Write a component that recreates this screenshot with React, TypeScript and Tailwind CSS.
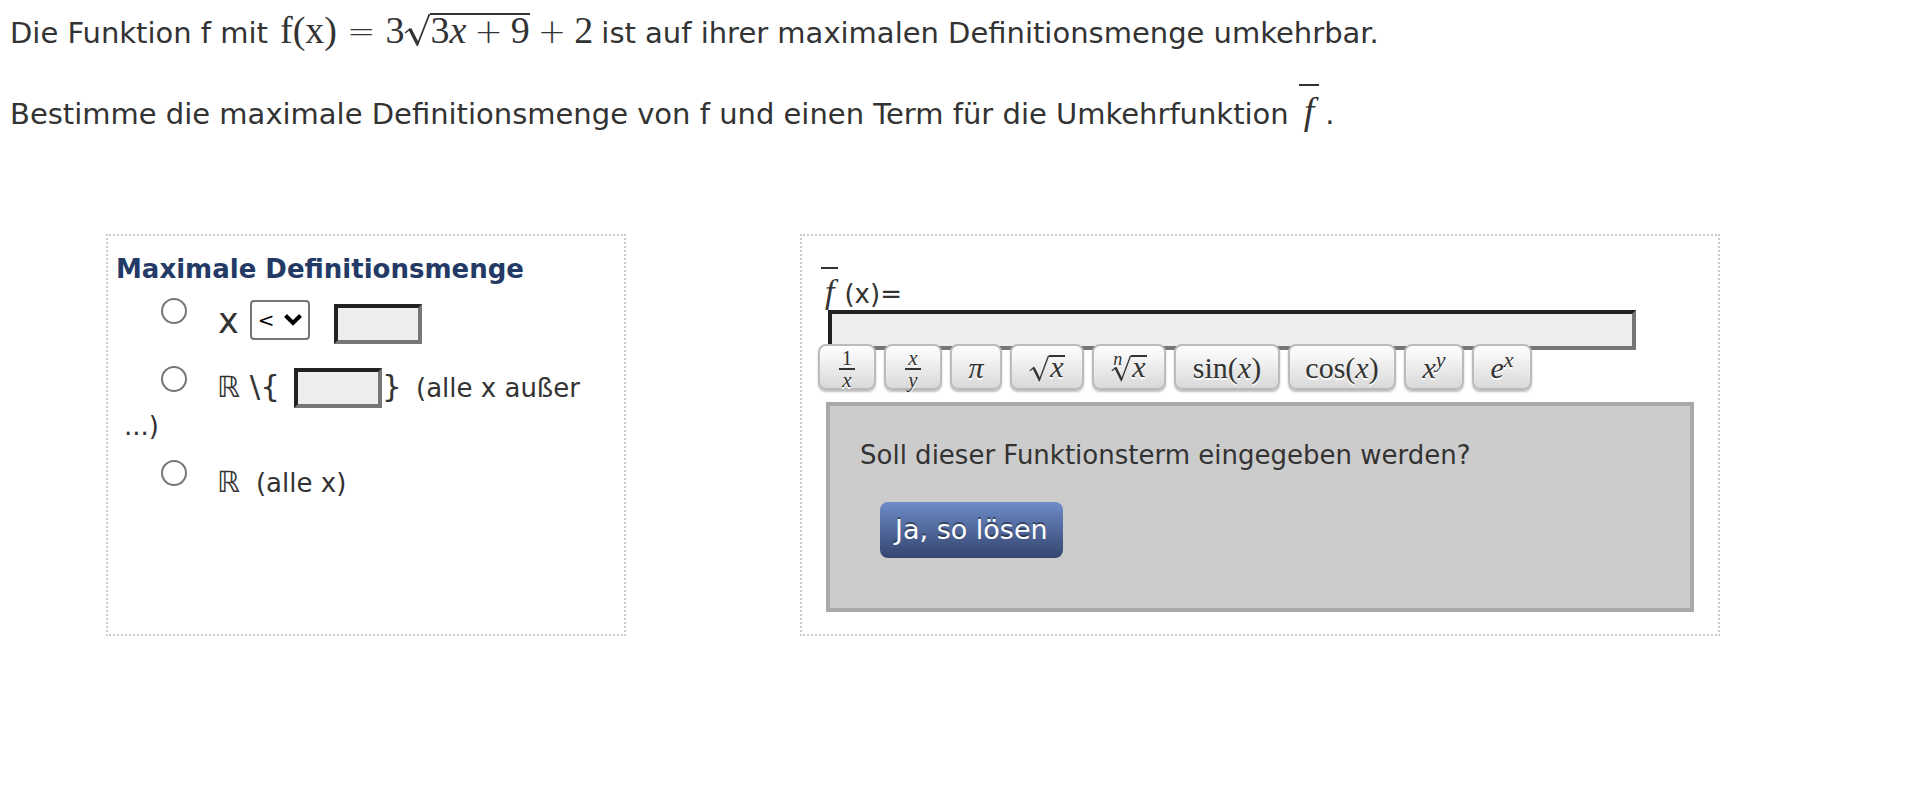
import type { ReactNode } from "react";

const MATH = "font-['Liberation_Serif',serif]";
const OPERATOR = "font-['DejaVu_Sans',sans-serif] text-[34px] font-extralight leading-6";

function Radical({ index, big, children }: { index?: string; big?: boolean; children: ReactNode }) {
  return (
    <span className="inline-flex items-baseline">
      {index && <span className="-mt-1 -mr-[11px] ml-0.5 self-start text-lg leading-4 italic">{index}</span>}
      <svg
        viewBox="0 0 24 34"
        preserveAspectRatio="none"
        className={big ? "h-[34px] w-[26px] self-start" : "h-[27px] w-5 self-start"}
        fill="none"
        stroke="currentColor"
        aria-hidden="true"
      >
        <path d="M1 20 L6 15.5" strokeWidth="1.5" />
        <path d="M5.5 16 L12.5 31" strokeWidth="3" />
        <path d="M12 33 L23.5 1" strokeWidth="1.6" />
      </svg>
      <span
        className={
          big
            ? "flex items-baseline border-t-2 border-current leading-[30px]"
            : "border-t-2 border-current px-px leading-5"
        }
      >
        {children}
      </span>
    </span>
  );
}

function Fraction({ top, bottom }: { top: ReactNode; bottom: ReactNode }) {
  return (
    <span className="flex flex-col items-center pt-0.5 text-[21px] leading-5">
      <span className="border-b-2 border-current px-[3px]">{top}</span>
      <span>{bottom}</span>
    </span>
  );
}

function InverseF({ large }: { large?: boolean }) {
  return (
    <span
      className={
        large
          ? "inline-block bg-[linear-gradient(#333,#333)] bg-[length:22px_2px] bg-no-repeat px-[5px] font-['Liberation_Serif',serif] text-[38px] leading-[54px] italic"
          : "inline-block bg-[linear-gradient(#333,#333)] bg-[length:20px_2px] bg-no-repeat px-1 font-['Liberation_Serif',serif] text-[34px] leading-[50px] italic"
      }
    >
      f
    </span>
  );
}

const keys: { name: string; width: string; face: ReactNode }[] = [
  { name: "Kehrwert", width: "w-[58px]", face: <Fraction top="1" bottom={<i>x</i>} /> },
  { name: "Bruch", width: "w-[58px]", face: <Fraction top={<i>x</i>} bottom={<i>y</i>} /> },
  { name: "Pi", width: "w-[52px]", face: <i>π</i> },
  { name: "Wurzel", width: "w-[74px]", face: <Radical><i>x</i></Radical> },
  { name: "n-te Wurzel", width: "w-[74px]", face: <Radical index="n"><i>x</i></Radical> },
  { name: "Sinus", width: "w-[106px]", face: <span>sin(<i>x</i>)</span> },
  { name: "Kosinus", width: "w-[108px]", face: <span>cos(<i>x</i>)</span> },
  { name: "Potenz", width: "w-[60px]", face: <span><i>x</i><sup className="text-[22px]"><i>y</i></sup></span> },
  { name: "Exponentialfunktion", width: "w-[60px]", face: <span><i>e</i><sup className="text-[22px]"><i>x</i></sup></span> },
];

const RADIO =
  "size-[26px] shrink-0 appearance-none rounded-full border-2 border-[#767676] bg-white checked:border-8 checked:border-[#2f66c0]";
const FIELD =
  "h-10 border-4 border-t-[#212121] border-r-[#767676] border-b-[#767676] border-l-[#212121] bg-[#ededed] px-1 text-[26px]";

export default function App() {
  return (
    <main className="min-h-screen bg-white font-['DejaVu_Sans',Verdana,sans-serif] text-[26px] leading-9 text-[#333]">
      <section className="px-[10px] pt-[9px] text-[29px]">
        <p className="flex h-12 items-baseline gap-2 leading-[48px]">
          <span>Die Funktion f mit</span>
          <span className={`${MATH} ml-1 flex items-baseline gap-[10px] text-[38px] leading-8`}>
            <span>f(x)</span>
            <span className={OPERATOR}>=</span>
            <span className="flex items-baseline">
              <span>3</span>
              <Radical big>
                <span>3<i>x</i></span>
                <span className={`${OPERATOR} mx-2`}>+</span>
                <span>9</span>
              </Radical>
            </span>
            <span className={`${OPERATOR} -mx-0.5`}>+</span>
            <span>2</span>
          </span>
          <span>ist auf ihrer maximalen Definitionsmenge umkehrbar.</span>
        </p>
        <p className="mt-[27px] flex h-[72px] items-baseline gap-[10px]">
          <span>Bestimme die maximale Definitionsmenge von f und einen Term für die Umkehrfunktion</span>
          <span>
            <InverseF large />
            <span className="ml-1.5">.</span>
          </span>
        </p>
      </section>

      <div className="mt-[78px] grid grid-cols-[520fr_920fr] gap-[174px] pr-[200px] pl-[106px]">
        <fieldset className="min-h-[402px] min-w-0 border-2 border-dotted border-[#ccc] pr-3">
          <h2 className="mt-[15px] pl-2 font-bold text-[#243a66]">Maximale Definitionsmenge</h2>

          <div className="mt-[11px] flex items-baseline pl-[53px]">
            <input id="less" type="radio" name="domain" className={`${RADIO} self-start`} />
            <label htmlFor="less" className="ml-[31px] text-[35px] leading-[46px]">x</label>
            <span className="relative mt-0.5 ml-[11px] self-start">
              <select
                aria-label="Relation"
                className="block h-10 w-[60px] appearance-none rounded border-2 border-[#767676] bg-white pl-1.5 text-xl leading-6 text-black"
              >
                <option>&lt;</option>
                <option>&gt;</option>
                <option>≤</option>
                <option>≥</option>
              </select>
              <svg
                viewBox="0 0 18 12"
                className="pointer-events-none absolute top-[14px] right-2 h-3 w-[18px]"
                fill="none"
                stroke="#000"
                strokeWidth="4"
                aria-hidden="true"
              >
                <path d="M1.5 1.5 L9 9 L16.5 1.5" />
              </svg>
            </span>
            <input aria-label="Grenze" type="text" className={`${FIELD} ml-6 w-[88px]`} />
          </div>

          <div className="mt-[22px] pl-4">
            <input id="except" type="radio" name="domain" className={`${RADIO} mr-[30px] ml-[37px] align-top`} />
            <label htmlFor="except" className="text-[31px] leading-10">
              <span className="text-[29px]">ℝ</span> \{"{"}
            </label>
            <input aria-label="Ausgenommener Wert" type="text" className={`${FIELD} ml-3.5 w-[88px]`} />
            <span className="text-[31px]">{"}"}</span>
            <label htmlFor="except" className="ml-1.5">
              <span> (alle x außer</span> <span>...)</span>
            </label>
          </div>

          <div className="mt-4 pl-4">
            <input id="all" type="radio" name="domain" className={`${RADIO} mr-[30px] ml-[37px] align-top`} />
            <label htmlFor="all" className="leading-[44px]">
              <span className="mr-4 text-[29px]">ℝ</span>(alle x)
            </label>
          </div>
        </fieldset>

        <section className="min-w-0 border-2 border-dotted border-[#ccc] pr-6 pb-[22px] pl-4">
          <label htmlFor="term" className="mt-[31px] flex h-[43px] items-baseline pl-[3px]">
            <InverseF />
            <span className="ml-1.5">(x)=</span>
          </label>
          <div className="pr-[58px] pl-[10px]">
            <input id="term" type="text" className={`${FIELD} block w-full`} />
          </div>
          <div className="relative -mt-1.5 flex flex-wrap gap-2">
            {keys.map((key) => (
              <button
                key={key.name}
                type="button"
                aria-label={key.name}
                className={`${MATH} ${key.width} flex h-[46px] items-center justify-center rounded-lg border-2 border-[#bbb] bg-linear-to-b from-white to-[#d9d9d9] pt-0.5 text-[30px] leading-8 shadow-[0_2px_2px_rgba(0,0,0,0.25)] text-shadow-[0_2px_0_#fff]`}
              >
                {key.face}
              </button>
            ))}
          </div>
          <div className="mt-3 ml-2 min-h-[210px] border-4 border-[#a9a9a9] bg-[#ccc] px-[30px] pt-[31px]">
            <p>Soll dieser Funktionsterm eingegeben werden?</p>
            <button
              type="button"
              className="mt-[29px] ml-5 h-14 rounded-lg bg-linear-to-b from-[#6f8cc9] to-[#34466f] px-[15px] text-[27px] text-white text-shadow-[0_-2px_0_rgba(0,0,0,0.4)]"
            >
              Ja, so lösen
            </button>
          </div>
        </section>
      </div>
    </main>
  );
}
